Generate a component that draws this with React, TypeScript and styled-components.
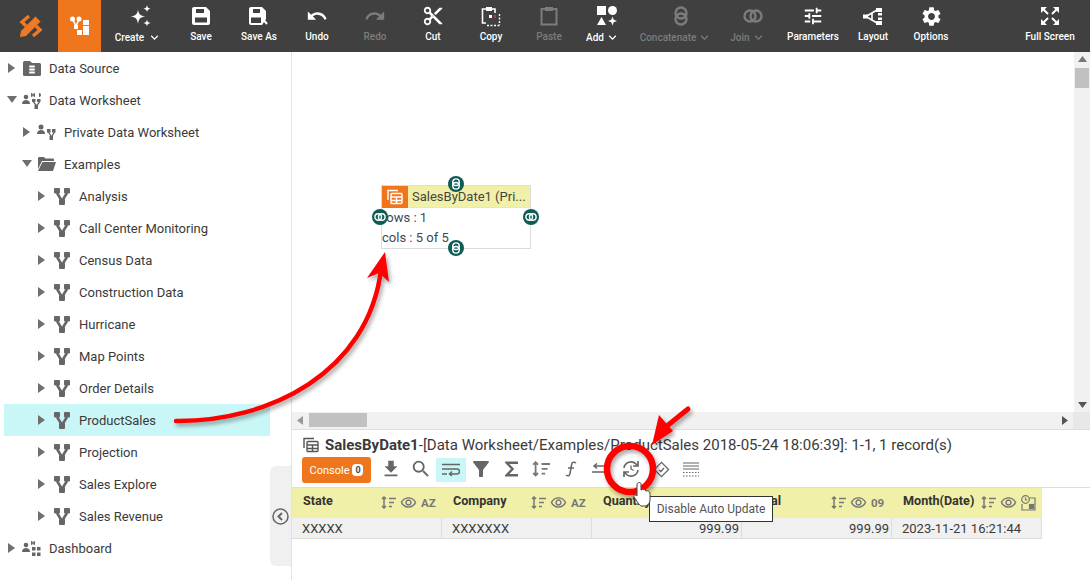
import React from "react";
import styled, { createGlobalStyle } from "styled-components";
import {
  MdUndo, MdRedo, MdContentCut, MdTune, MdSettings, MdFileDownload, MdSearch, MdFilterAlt, MdKeyboardArrowDown, MdOutlineRemoveRedEye,
} from "react-icons/md";

const Global = createGlobalStyle`
  html, body { margin: 0; padding: 0; width: 1090px; height: 580px; overflow: hidden; background: #fff; }
  body { font-family: Roboto, "Liberation Sans", sans-serif; color: #333; }
  * { box-sizing: border-box; }
`;

const Page = styled.div`
  position: relative; width: 1090px; height: 580px; display: flex; flex-direction: column; overflow: hidden;
`;
const TopBar = styled.header`
  height: 52px; flex: none; background: #404040; display: flex;
`;
const LogoCell = styled.div<{ $active?: boolean; $w: number }>`
  width: ${p => p.$w}px; display: flex; align-items: center; justify-content: center;
  padding-left: ${p => (p.$active ? 0 : 3)}px;
  background: ${p => (p.$active ? "#f0761e" : "transparent")};
`;
const ToolButton = styled.div<{ $w: number; $off?: boolean; $push?: boolean }>`
  width: ${p => p.$w}px; flex: none; display: flex; flex-direction: column; align-items: center;
  padding-top: 5px; color: ${p => (p.$off ? "#7c7c7c" : "#fff")};
  margin-left: ${p => (p.$push ? "auto" : "0")};
`;
const ToolIcon = styled.div<{ $dx?: number }>`
  height: 22px; width: 24px; display: flex; align-items: center; justify-content: center;
  margin-left: ${p => p.$dx ?? 0}px;
`;
const ToolLabel = styled.div<{ $dx?: number }>`
  margin-top: 3px; margin-left: ${p => p.$dx ?? 0}px; font-size: 10px; font-weight: 500; line-height: 14px; white-space: nowrap;
  display: flex; align-items: center; gap: 1px;
`;
const Body = styled.div`
  flex: 1; display: flex; min-height: 0;
`;
const Sidebar = styled.aside`
  width: 292px; flex: none; border-right: 1px solid #e2e2e2; padding: 0 0 0 4px; position: relative;
`;
const Row = styled.div<{ $level: number; $sel?: boolean }>`
  width: 266px; height: 32px; display: flex; align-items: center; padding-left: ${p => 3 + p.$level * 15}px;
  background: ${p => (p.$sel ? "#c9f6f6" : "transparent")}; font-size: 13px; color: #3a3a3a;
`;
const CaretBox = styled.div`
  width: 11px; height: 12px; display: flex; align-items: center; justify-content: flex-start; flex: none;
`;
const RowIcon = styled.div`
  width: 19px; height: 18px; margin: 0 8px 0 4px; flex: none; display: flex; align-items: center; justify-content: center;
`;
const CollapseHandle = styled.div`
  position: absolute; right: 0; top: 414px; width: 21px; height: 100px; background: #f0f0f0; border-radius: 6px 0 0 6px;
  display: flex; align-items: center; justify-content: center;
`;
const Workspace = styled.main`
  flex: 1; min-width: 0; display: flex; flex-direction: column;
`;
const CanvasArea = styled.div`
  height: 360px; flex: none; display: flex; position: relative;
`;
const Canvas = styled.div`
  flex: 1; position: relative;
`;
const VScroll = styled.div`
  width: 16px; flex: none; background: #f1f1f1; display: flex; flex-direction: column; align-items: center; justify-content: space-between; padding: 4px 0; position: relative;
`;
const VThumb = styled.div`
  position: absolute; top: 16px; left: 1px; width: 14px; height: 20px; background: #c1c1c1;
`;
const HScrollRow = styled.div`
  height: 18px; flex: none; display: flex; background: #f1f1f1; border-bottom: 1px solid #dedede; position: relative;
`;
const HTrack = styled.div`
  flex: 1; display: flex; align-items: center; justify-content: space-between; padding: 0 5px;
  position: relative;
`;
const HThumb = styled.div`
  position: absolute; left: 17px; top: 1px; width: 58px; height: 14px; background: #c1c1c1;
`;
const HCorner = styled.div`
  width: 17px; background: #e8e8e8;
`;
const Node = styled.div`
  position: absolute; left: 89px; top: 133px; width: 150px; height: 64px; background: #fff; border: 1px solid #dcdcdc;
`;
const NodeHead = styled.div`
  height: 22px; background: #f0f0a8; display: flex; align-items: center; font-size: 13px; color: #444; border-bottom: 1px solid #e2e2e2;
`;
const NodeBadge = styled.div`
  width: 26px; height: 22px; background: #f0761e; margin-right: 4px; display: flex; align-items: center; justify-content: center;
`;
const NodeLine = styled.div`
  font-size: 13px; line-height: 20px; height: 20px; color: #3c4a55; white-space: nowrap;
`;
const Port = styled.div<{ $x: number; $y: number }>`
  position: absolute; left: ${p => p.$x}px; top: ${p => p.$y}px; width: 16px; height: 16px; border-radius: 50%;
  background: #0f5c55; display: flex; align-items: center; justify-content: center;
`;
const Panel = styled.section`
  flex: 1; min-height: 0; display: flex; flex-direction: column;
`;
const TitleRow = styled.div`
  height: 27px; padding: 2px 0 0 11px; display: flex; align-items: center; font-size: 15px; color: #3a3a3a; white-space: nowrap;
`;
const TitleIcon = styled.div`
  width: 22px; display: flex; align-items: center;
`;
const TitleName = styled.b`
  font-weight: 700;
`;
const ActionBar = styled.div`
  height: 31px; flex: none; display: flex; align-items: flex-start; padding-left: 10px; border-bottom: 1px solid #dedede;
`;
const ConsoleButton = styled.div`
  width: 69px; height: 26px; background: #f0761e; border-radius: 3px; color: #fff; font-size: 11px; margin-right: 5px;
  display: flex; align-items: center; justify-content: center; gap: 3px;
`;
const Count = styled.span`
  width: 11px; height: 12px; border-radius: 4px; background: #fff; color: #444; font-size: 9px; font-weight: 700;
  display: flex; align-items: center; justify-content: center;
`;
const ActionIcon = styled.div<{ $on?: boolean }>`
  width: 30px; height: 24px; margin-top: 1px; padding-bottom: 2px; display: flex; align-items: center; justify-content: center;
  background: ${p => (p.$on ? "#c9f6f6" : "transparent")};
`;
const GridRow = styled.div`
  display: flex; width: 750px;
`;
const HeadCell = styled.div`
  width: 150px; height: 30px; background: #f0f0a8; flex: none; display: flex; align-items: center; padding: 0 6px 6px 11px;
  font-size: 12.6px; font-weight: 700; color: #333; white-space: nowrap;
`;
const HeadIcons = styled.div`
  margin-left: auto; display: flex; align-items: center; gap: 4px; padding-top: 5px;
`;
const TypeTag = styled.span`
  font-size: 11.5px; font-weight: 700; color: #777; width: 15px;
`;
const DataCell = styled.div<{ $right?: boolean }>`
  width: 150px; height: 21px; background: #f0f0f0; flex: none; display: flex; align-items: center;
  justify-content: ${p => (p.$right ? "flex-end" : "flex-start")};
  padding: 0 2px 0 10px; font-size: 13px; color: #3a3a3a; border-right: 1px solid #dcdcdc; border-bottom: 1px solid #dcdcdc;
`;
const Tip = styled.div`
  position: absolute; left: 649px; top: 496px; width: 124px; height: 26px; background: #fff; border: 1px solid #333;
  font-size: 12px; color: #555; display: flex; align-items: center; justify-content: center;
`;
const Overlay = styled.svg`
  position: absolute; left: 0; top: 0; pointer-events: none;
`;
const ChevronGap = styled.span<{ $g: number }>`
  display: flex; margin-left: ${p => p.$g}px;
`;

const Caret = ({ open }: { open?: boolean }) => (
  <svg width="11" height="10" viewBox="0 0 11 10">
    {open ? <path d="M0 1h10L5 8z" fill="#6f6f6f" /> : <path d="M1 0l7 5-7 5z" fill="#6f6f6f" />}
  </svg>
);
const G = "#666";
const Flow = () => (
  <svg width="16" height="17" viewBox="0 0 16 17" fill={G}>
    <rect x="0" y="0" width="6" height="5.5" rx="1" /><rect x="10" y="0" width="6" height="5.5" rx="1" /><rect x="5" y="11" width="6" height="6" rx="1" />
    <path d="M3 5l5 8 5-8" fill="none" stroke={G} strokeWidth="2.600" />
  </svg>
);
const DataSourceIcon = () => (
  <svg width="18" height="15" viewBox="0 0 18 15">
    <path d="M0 1.5A1.5 1.5 0 0 1 1.500 0H7l2 2h7.500A1.500 1.500 0 0 1 18 3.500v10a1.500 1.500 0 0 1-1.500 1.500h-15A1.500 1.500 0 0 1 0 13.500z" fill={G} />
    <rect x="6" y="4.500" width="6" height="2" rx="1" fill="#fff" /><rect x="6" y="7.500" width="6" height="2" rx="1" fill="#fff" /><rect x="6" y="10.500" width="6" height="2" rx="1" fill="#fff" />
  </svg>
);
const PeopleFlow = () => (
  <svg width="19" height="17" viewBox="0 0 19 17" fill={G}>
    <circle cx="4" cy="3" r="2.500" /><path d="M0 10c0-3 2-4 4-4s4 1 4 4z" />
    <rect x="10" y="5" width="3.500" height="3.500" /><rect x="15" y="5" width="3.500" height="3.500" /><rect x="12.500" y="12" width="3.500" height="4" />
    <path d="M11.500 8l3 5 3-5" fill="none" stroke={G} strokeWidth="1.400" />
  </svg>
);
const TeamFlow = () => (
  <svg width="19" height="17" viewBox="0 0 19 17" fill={G}>
    <circle cx="4" cy="5" r="2.300" /><path d="M0 12c0-3 2-4 4-4s4 1 4 4z" />
    <path d="M9 1a2 2 0 0 1 0 4zM13 1a2 2 0 0 0 0 4zM17 1a2 2 0 0 1 0 4z" />
    <rect x="10" y="7" width="3.500" height="3" /><rect x="15" y="7" width="3.500" height="3" /><rect x="12.500" y="13" width="3.500" height="4" />
    <path d="M11.500 10l3 4 3-4" fill="none" stroke={G} strokeWidth="1.300" />
  </svg>
);
const FolderOpen = () => (
  <svg width="18" height="14" viewBox="0 0 18 14" fill={G}>
    <path d="M0 1.200A1.200 1.200 0 0 1 1.200 0H6l1.500 1.500H15a1 1 0 0 1 1 1V4H4L0 12z" />
    <path d="M4.500 5H18l-3 9H0z" />
  </svg>
);
const DashIcon = () => (
  <svg width="19" height="17" viewBox="0 0 19 17" fill={G}>
    <circle cx="4" cy="5" r="2.300" /><path d="M0 12c0-3 2-4 4-4s4 1 4 4z" />
    <path d="M9 1a2 2 0 0 1 0 4zM13 1a2 2 0 0 0 0 4z" />
    <rect x="10" y="7" width="3.500" height="3.500" /><rect x="15" y="7" width="3.500" height="3.500" /><rect x="10" y="12.500" width="3.500" height="3.500" /><rect x="15" y="12.500" width="3.500" height="3.500" />
  </svg>
);

const treeData: { label: string; level: number; open?: boolean; icon: React.ReactNode; sel?: boolean }[] = [
  { label: "Data Source", level: 0, icon: <DataSourceIcon /> },
  { label: "Data Worksheet", level: 0, open: true, icon: <TeamFlow /> },
  { label: "Private Data Worksheet", level: 1, icon: <PeopleFlow /> },
  { label: "Examples", level: 1, open: true, icon: <FolderOpen /> },
  ...["Analysis", "Call Center Monitoring", "Census Data", "Construction Data", "Hurricane", "Map Points", "Order Details", "ProductSales", "Projection", "Sales Explore", "Sales Revenue"].map(label => ({
    label, level: 2, icon: <Flow />, sel: label === "ProductSales",
  })),
  { label: "Dashboard", level: 0, icon: <DashIcon /> },
];

const W = "#fff";
const Sparkle = () => (
  <svg width="22" height="22" viewBox="0 0 22 22" fill={W}>
    <path d="M8 4.500c.7 4.800 2.200 6.300 7.500 7-5.300.7-6.800 2.200-7.500 7.500-.7-5.300-2.200-6.800-7.500-7.500 5.300-.7 6.800-2.200 7.500-7z" />
    <path d="M17 0c.4 2.500 1.200 3.300 3.500 3.700-2.300.4-3.100 1.200-3.500 3.500-.4-2.300-1.200-3.100-3.500-3.500 2.300-.4 3.100-1.200 3.500-3.700zM17 14.500c.4 2.200 1.200 3 3.500 3.500-2.300.4-3.100 1.200-3.500 3.500-.4-2.300-1.200-3.100-3.500-3.500 2.300-.5 3.100-1.300 3.500-3.500z" />
  </svg>
);
const SaveIcon = () => (
  <svg width="18" height="18" viewBox="0 0 18 18">
    <path d="M2 0h12l4 4v12a2 2 0 0 1-2 2H2a2 2 0 0 1-2-2V2a2 2 0 0 1 2-2z" fill={W} />
    <rect x="4" y="2" width="8" height="4" fill="#404040" /><rect x="3" y="10.500" width="12" height="5" fill="#404040" />
  </svg>
);
const SaveAsIcon = () => (
  <svg width="20" height="19" viewBox="0 0 20 19">
    <path d="M2 0h11l4 4v8l-4 6H2a2 2 0 0 1-2-2V2a2 2 0 0 1 2-2z" fill={W} />
    <rect x="4" y="2" width="7" height="4" fill="#404040" /><rect x="2" y="10.500" width="10" height="5.500" fill="#404040" />
    <path d="M13 11l5 6" stroke={W} strokeWidth="2" />
  </svg>
);
const CopyIcon = () => (
  <svg width="20" height="21" viewBox="0 0 20 21" fill="none">
    <path d="M5 3H1.500v14H5M11 3h3v4" stroke={W} strokeWidth="1.600" />
    <rect x="5" y="1" width="6" height="4" fill={W} />
    <rect x="8" y="9" width="3" height="3" fill={W} /><rect x="13" y="9" width="2" height="3" fill="#c33" />
    <path d="M6 19.500h13M18.500 8v11" stroke={W} strokeWidth="1.400" strokeDasharray="2 1.500" />
  </svg>
);
const PasteIcon = () => (
  <svg width="18" height="20" viewBox="0 0 18 20" fill="none">
    <path d="M5 3H1.500v15.500h15V3H13" stroke="#7c7c7c" strokeWidth="2" />
    <rect x="5" y="1" width="8" height="4" fill="#7c7c7c" />
  </svg>
);
const AddShapes = () => (
  <svg width="20" height="20" viewBox="0 0 20 20" fill={W}>
    <rect x="0" y="0" width="9" height="9" /><circle cx="15.500" cy="4.500" r="4.500" />
    <path d="M4.500 11l4.500 8H0z" /><path d="M15.500 10.500l1.200 3.300 3.300 1.200-3.300 1.200-1.200 3.300-1.200-3.300-3.300-1.200 3.300-1.200z" />
  </svg>
);
const VRings = ({ c, size = 20 }: { c: string; size?: number }) => (
  <svg width={size} height={size} viewBox="0 0 20 20" fill="none" stroke={c} strokeWidth="2.400">
    <circle cx="10" cy="7" r="5.500" /><circle cx="10" cy="13" r="5.500" />
  </svg>
);
const HRings = ({ c, size = 20 }: { c: string; size?: number }) => (
  <svg width={size} height={size} viewBox="0 0 20 20" fill="none" stroke={c} strokeWidth="2.400">
    <circle cx="7" cy="10" r="5.500" /><circle cx="13" cy="10" r="5.500" />
  </svg>
);
const LayoutIcon = () => (
  <svg width="20" height="19" viewBox="0 0 20 19" fill={W}>
    <rect x="0" y="7.500" width="5" height="4" /><rect x="13" y="1" width="6" height="4" /><rect x="13" y="14" width="6" height="4" /><rect x="15" y="6" width="4" height="2.500" /><rect x="15" y="10.500" width="4" height="2.500" />
    <path d="M3 9.500L14 3M3 9.500L14 16M9 6v7" fill="none" stroke={W} strokeWidth="1.600" />
  </svg>
);
const FullIcon = () => (
  <svg width="18" height="18" viewBox="0 0 18 18" fill={W} stroke={W}>
    <path d="M0 0h6L0 6z" strokeWidth="0" /><path d="M2 2l5 5" strokeWidth="2" />
    <path d="M18 0h-6l6 6z" strokeWidth="0" /><path d="M16 2l-5 5" strokeWidth="2" />
    <path d="M0 18h6L0 12z" strokeWidth="0" /><path d="M2 16l5-5" strokeWidth="2" />
    <path d="M18 18h-6l6-6z" strokeWidth="0" /><path d="M16 16l-5-5" strokeWidth="2" />
  </svg>
);
const LogoMark = () => (
  <svg width="26" height="26" viewBox="0 0 26 26">
    <g fill="none" stroke="#ef7a25" strokeWidth="3.400">
      <path d="M11 3L4 9l4 4" /><path d="M15 23l7-6-4-4" />
    </g>
    <path d="M18 3l5 5L8 23l-6 1 1-6z" fill="#ef7a25" />
    <path d="M18 3l5 5" stroke="#404040" strokeWidth="1.500" />
  </svg>
);
const AppMark = () => (
  <svg width="20" height="20" viewBox="0 0 20 20" fill={W}>
    <circle cx="2.500" cy="3" r="2.500" /><circle cx="9" cy="3" r="2.500" /><path d="M2.500 3l3.500 7 3-7" fill="none" stroke={W} strokeWidth="1.600" />
    <rect x="4" y="9" width="4" height="4" /><rect x="13" y="4" width="6" height="5" /><rect x="13" y="10" width="6" height="9" /><rect x="7" y="14" width="5" height="5" />
  </svg>
);

const tools: { label: string; w: number; icon: React.ReactNode; off?: boolean; menu?: number; push?: boolean; dx?: number; labelDx?: number }[] = [
  { label: "Create", w: 71, icon: <Sparkle />, menu: 2, dx: 9, labelDx: 4 },
  { label: "Save", w: 58, icon: <SaveIcon /> },
  { label: "Save As", w: 58, icon: <SaveAsIcon /> },
  { label: "Undo", w: 58, icon: <MdUndo size={22} /> },
  { label: "Redo", w: 58, icon: <MdRedo size={22} />, off: true },
  { label: "Cut", w: 58, icon: <MdContentCut size={22} /> },
  { label: "Copy", w: 58, icon: <CopyIcon /> },
  { label: "Paste", w: 58, icon: <PasteIcon />, off: true },
  { label: "Add", w: 50, icon: <AddShapes />, menu: 0, dx: 8 },
  { label: "Concatenate", w: 96, icon: <VRings c="#7c7c7c" />, off: true, menu: 0, dx: 10 },
  { label: "Join", w: 48, icon: <HRings c="#7c7c7c" />, off: true, menu: 0, dx: 10 },
  { label: "Parameters", w: 82, icon: <MdTune size={22} /> },
  { label: "Layout", w: 38, icon: <LayoutIcon /> },
  { label: "Options", w: 78, icon: <MdSettings size={23} /> },
  { label: "Full Screen", w: 80, icon: <FullIcon />, push: true },
];

const SortIcon = ({ s = 15 }: { s?: number }) => (
  <svg width={s} height={s * 13 / 15} viewBox="0 0 15 13" fill="none" stroke="#777" strokeWidth="1.500">
    <path d="M3 1v11M1 3l2-2 2 2M1 10l2 2 2-2" /><path d="M8 2.500h7M8 6.500h5M8 10.500h3" />
  </svg>
);
const Eye = () => <MdOutlineRemoveRedEye size={17} color="#777" />;
const CalendarTag = () => (
  <svg width="15" height="16" viewBox="0 0 15 16" fill="none" stroke="#777" strokeWidth="1.200">
    <circle cx="4.500" cy="4.500" r="3.800" /><path d="M4.500 2.500v2.500h2" /><path d="M8 3h6v12H1V9" /><rect x="8.500" y="9.500" width="4" height="4" fill="#777" />
  </svg>
);
const TableIcon = ({ c, s = 15 }: { c: string; s?: number }) => (
  <svg width={s} height={s} viewBox="0 0 16 16" fill="none" stroke={c} strokeWidth="1.400">
    <path d="M1 11V1.500h10" /><rect x="4" y="4.500" width="11" height="10" rx="1" /><path d="M4 8h11M4 11.500h11M9.500 8v6.500" />
  </svg>
);
const GI = "#666";
const WrapIcon = () => (
  <svg width="18" height="13" viewBox="0 0 18 13" fill="none" stroke={GI} strokeWidth="1.500">
    <path d="M0 1.500h18M0 6h15a2.500 2.500 0 0 1 0 5H8M10 8.500L7.500 11l2.500 2M0 11h5" />
  </svg>
);
const Sigma = () => (
  <svg width="13" height="16" viewBox="0 0 12 14" fill="none" stroke={GI} strokeWidth="2.200"><path d="M12 1.200H1.500L7 7l-5.500 5.800H12" /></svg>
);
const Func = () => (
  <svg width="12" height="18" viewBox="0 0 12 16" fill="none" stroke={GI} strokeWidth="1.500"><path d="M11 2c-2-1.500-4-.8-4.400 1.500L5 12.500C4.600 15 3 15.500 1 14M3 7h6" /></svg>
);
const Swap = () => (
  <svg width="18" height="12" viewBox="0 0 18 12" fill="none" stroke={GI} strokeWidth="1.500"><path d="M18 3H3M5 0.500L2 3l3 2.500M0 9h15" /></svg>
);
const Refresh = () => (
  <svg width="18" height="18" viewBox="0 0 18 18" fill="none" stroke={GI} strokeWidth="1.700">
    <path d="M2 8a7 7 0 0 1 12-4l2 2M16 1v5h-5M16 10a7 7 0 0 1-12 4l-2-2M2 17v-5h5" /><path d="M9 5.500V9l2.500 1.500" strokeWidth="1.300" />
  </svg>
);
const Diamond = () => (
  <svg width="17" height="17" viewBox="0 0 17 17" fill="none" stroke={GI} strokeWidth="1.300">
    <rect x="3.500" y="3.500" width="10" height="10" transform="rotate(45 8.500 8.500)" /><path d="M6 9l2 1.500L11 7" />
  </svg>
);
const Lines = () => (
  <svg width="16" height="15" viewBox="0 0 16 15" fill="none" stroke={GI} strokeWidth="1.200">
    <path d="M0 1h16M0 4h16M0 7h16" /><path d="M0 10.500h16M0 14h16" strokeDasharray="1.500 1.500" />
  </svg>
);

const columns = [
  { name: "State", tag: "AZ", value: "XXXXX" },
  { name: "Company", tag: "AZ", value: "XXXXXXX" },
  { name: "Quantity", tag: "09", value: "999.99", right: true },
  { name: "Total", tag: "09", value: "999.99", right: true },
  { name: "Month(Date)", tag: "", value: "2023-11-21 16:21:44" },
];

export default function App() {
  return (
    <Page>
      <Global />
      <TopBar>
        <LogoCell $w={58}><LogoMark /></LogoCell>
        <LogoCell $w={43} $active><AppMark /></LogoCell>
        {tools.map(t => (
          <ToolButton key={t.label} $w={t.w} $off={t.off} $push={t.push}>
            <ToolIcon $dx={t.dx}>{t.icon}</ToolIcon>
            <ToolLabel $dx={t.labelDx}>
              {t.label}
              {t.menu !== undefined ? <ChevronGap $g={t.menu}><MdKeyboardArrowDown size={15} /></ChevronGap> : null}
            </ToolLabel>
          </ToolButton>
        ))}
      </TopBar>
      <Body>
        <Sidebar>
          {treeData.map(r => (
            <Row key={r.label} $level={r.level} $sel={r.sel}>
              <CaretBox><Caret open={r.open} /></CaretBox>
              <RowIcon>{r.icon}</RowIcon>
              {r.label}
            </Row>
          ))}
          <CollapseHandle>
            <svg width="17" height="17" viewBox="0 0 17 17" fill="none" stroke="#666">
              <circle cx="8.500" cy="8.500" r="7.500" strokeWidth="1.500" /><path d="M10 5L6.500 8.500 10 12" strokeWidth="2" />
            </svg>
          </CollapseHandle>
        </Sidebar>
        <Workspace>
          <CanvasArea>
            <Canvas>
              <Node>
                <NodeHead>
                  <NodeBadge><TableIcon c="#fff" s={16} /></NodeBadge>
                  SalesByDate1 (Pri...
                </NodeHead>
                <NodeLine>rows : 1</NodeLine>
                <NodeLine>cols : 5 of 5</NodeLine>
              </Node>
              <Port $x={156} $y={124}><VRings c="#fff" size={12} /></Port>
              <Port $x={80} $y={157}><HRings c="#fff" size={12} /></Port>
              <Port $x={231} $y={157}><HRings c="#fff" size={12} /></Port>
              <Port $x={156} $y={188}><VRings c="#fff" size={12} /></Port>
            </Canvas>
            <VScroll>
              <VThumb />
              <svg width="9" height="6" viewBox="0 0 9 6"><path d="M4.500 0l4.500 6H0z" fill="#777" /></svg>
              <svg width="9" height="6" viewBox="0 0 9 6"><path d="M4.500 6L0 0h9z" fill="#555" /></svg>
            </VScroll>
          </CanvasArea>
          <HScrollRow>
            <HTrack>
              <HThumb />
              <svg width="6" height="9" viewBox="0 0 6 9"><path d="M0 4.500L6 0v9z" fill="#999" /></svg>
              <svg width="6" height="9" viewBox="0 0 6 9"><path d="M6 4.500L0 0v9z" fill="#555" /></svg>
            </HTrack>
            <HCorner />
          </HScrollRow>
          <Panel>
            <TitleRow>
              <TitleIcon><TableIcon c="#555" s={16} /></TitleIcon>
              <TitleName>SalesByDate1</TitleName>-[Data Worksheet/Examples/ProductSales 2018-05-24 18:06:39]: 1-1, 1 record(s)
            </TitleRow>
            <ActionBar>
              <ConsoleButton>Console <Count>0</Count></ConsoleButton>
              <ActionIcon><MdFileDownload size={22} color={GI} /></ActionIcon>
              <ActionIcon><MdSearch size={22} color={GI} /></ActionIcon>
              <ActionIcon $on><WrapIcon /></ActionIcon>
              <ActionIcon><MdFilterAlt size={24} color={GI} /></ActionIcon>
              <ActionIcon><Sigma /></ActionIcon>
              <ActionIcon><SortIcon s={18} /></ActionIcon>
              <ActionIcon><Func /></ActionIcon>
              <ActionIcon><Swap /></ActionIcon>
              <ActionIcon><Refresh /></ActionIcon>
              <ActionIcon><Diamond /></ActionIcon>
              <ActionIcon><Lines /></ActionIcon>
            </ActionBar>
            <GridRow>
              {columns.map(c => (
                <HeadCell key={c.name}>
                  {c.name}
                  <HeadIcons>
                    <SortIcon />
                    <Eye />
                    {c.tag ? <TypeTag>{c.tag}</TypeTag> : <CalendarTag />}
                  </HeadIcons>
                </HeadCell>
              ))}
            </GridRow>
            <GridRow>
              {columns.map(c => <DataCell key={c.name} $right={c.right}>{c.value}</DataCell>)}
            </GridRow>
          </Panel>
        </Workspace>
      </Body>
      <Tip>Disable Auto Update</Tip>
      <Overlay width="1090" height="580" viewBox="0 0 1090 580">
        <defs>
          <filter id="sh" x="-20%" y="-20%" width="140%" height="140%">
            <feDropShadow dx="2" dy="3" stdDeviation="2" floodColor="#000" floodOpacity="0.35" />
          </filter>
        </defs>
        <g filter="url(#sh)">
          <path d="M176 421C270 422 368 372 381 270" fill="none" stroke="#f00" strokeWidth="4.500" strokeLinecap="round" />
          <path d="M385 252L389 282 379 273 367 278z" fill="#f00" />
          <path d="M688 409L662 430" fill="none" stroke="#f00" strokeWidth="5" strokeLinecap="round" />
          <path d="M652 445L659 415 673 431z" fill="#f00" />
          <circle cx="630" cy="469" r="23" fill="none" stroke="#f00" strokeWidth="6.500" />
        </g>
        <path d="M637 484c1-2 4-2 4 0v6c2-1 4-1 5 1 2-.5 3 0 4 2v7c0 3-2 5-4 6h-5c-2-1-4-5-7-9-1-2 1-3 3-1z" fill="#fff" stroke="#444" strokeWidth="1" />
      </Overlay>
    </Page>
  );
}
